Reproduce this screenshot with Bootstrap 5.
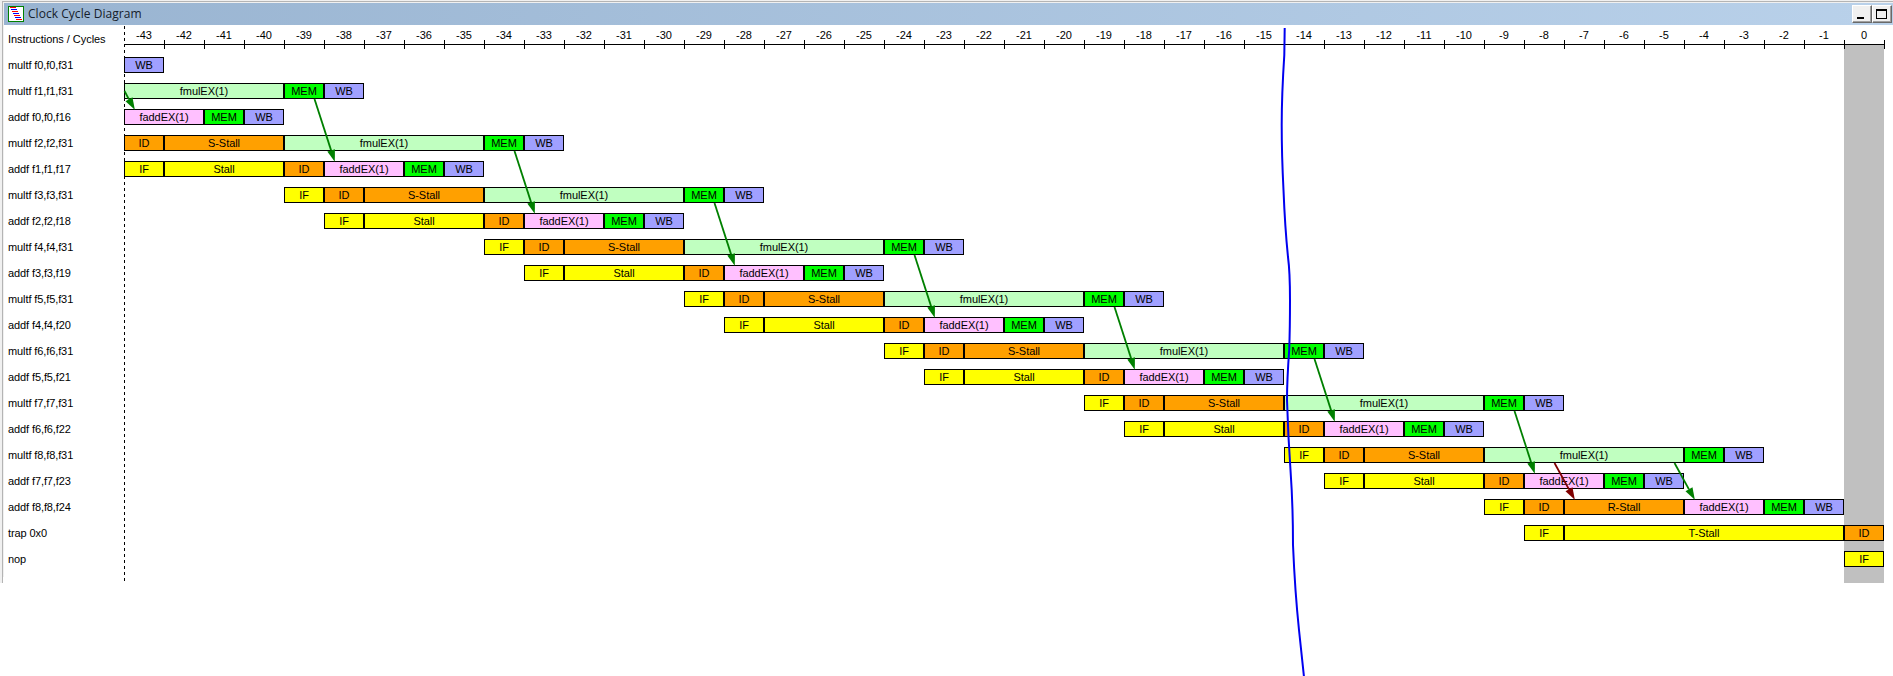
<!DOCTYPE html>
<html lang="en">
<head>
<meta charset="utf-8">
<title>Clock Cycle Diagram</title>
<link href="https://cdn.jsdelivr.net/npm/bootstrap@5.3.0/dist/css/bootstrap.min.css" rel="stylesheet">
<style>
  body { width: 1893px; height: 676px; background: #fff; color: #000; font-family: "Liberation Sans", Arial, sans-serif; font-size: 11px; line-height: 16px; }
  .win { height: 583px; border-top: 1px solid #f0f0f0; border-left: 2px solid #f0f0f0; }
  .win-inner { height: 582px; border-top: 1px solid #b4b4b4; border-left: 1px solid #b4b4b4; }
  .win-body { border-left: 1px solid #f0f0f0; border-top: 1px solid #f0f0f0; }
  .titlebar { height: 22px; padding-right: 1px; background: linear-gradient(90deg, #99b4d1, #b9d1ea); font-family: "Open Sans", "Noto Sans", sans-serif; color: #15202b; }
  .caption { font-size: 12px; letter-spacing: .04px; }
  .winbtn { width: 20px; height: 18px; background: #f0f0f0; border: 1px solid; border-color: #fff #696969 #696969 #fff; box-shadow: inset -1px -1px #a0a0a0; }
  .ruler { height: 32px; }
  .side { width: 120px; padding-left: 4px; white-space: nowrap; letter-spacing: -.1px; }
  .ruler .side { padding-top: 6px; letter-spacing: -.04px; }
  .grid-cols { display: grid; grid-template-columns: repeat(44, 40px); }
  .tick { height: 23px; padding-top: 2px; text-align: center; position: relative; }
  .scale { border-bottom: 1px solid #000; width: 1761px; height: 20px; }
  .tick::after { content: ""; position: absolute; right: -1px; top: 15px; width: 1px; height: 9px; background: #000; }
  .trow { height: 26px; }
  .stage { height: 16px; line-height: 15px; border: 1px solid #000; text-align: center; white-space: nowrap; overflow: hidden; letter-spacing: -.05px; }
  .s-WB { background: #a0a0ff; } .s-MEM { background: #0f0; } .s-EXM { background: #c0ffc0; }
  .s-EXA { background: #ffc0ff; } .s-ID { background: #ffa000; } .s-IF { background: #ff0; }
  .now { position: absolute; left: 1844px; top: 45px; width: 40px; height: 538px; background: #c0c0c0; }
  .rows { position: relative; }
  .overlay { position: absolute; left: 0; top: 0; pointer-events: none; }
</style>
<script src="https://cdn.jsdelivr.net/npm/bootstrap@5.3.0/dist/js/bootstrap.bundle.min.js"></script>
</head>
<body class="position-relative overflow-hidden m-0">
<div class="now"></div>
<div class="win">
  <div class="win-inner">
    <div class="win-body">
      <header class="titlebar d-flex align-items-center">
        <svg class="ms-1" width="16" height="16" viewBox="0 0 16 16" shape-rendering="crispEdges">
          <rect x=".5" y=".5" width="15" height="15" fill="#fff" stroke="#008000"/>
          <path d="M2 1.5h6M4 5.5h6M6 9.5h6M8 13.5h6" stroke="#f00"/>
          <path d="M3 3.5h6M5 7.5h6M7 11.5h6" stroke="#00f"/>
        </svg>
        <span class="caption ms-1">Clock Cycle Diagram</span>
        <div class="d-flex ms-auto">
          <div class="winbtn"><svg class="d-block" width="18" height="16" shape-rendering="crispEdges"><path d="M4 11h7v2H4z"/></svg></div>
          <div class="winbtn"><svg class="d-block" width="18" height="16" shape-rendering="crispEdges"><path fill-rule="evenodd" d="M3 3h11v10H3zM4 5v7h9V5z"/></svg></div>
        </div>
      </header>
      <div class="ruler d-flex">
        <div class="side">Instructions / Cycles</div>
        <div class="scale grid-cols" id="scale"></div>
      </div>
      <main class="rows" id="rows"></main>
    </div>
  </div>
</div>
<svg class="overlay" width="1893" height="676" viewBox="0 0 1893 676">
  <path d="M124.5 26V582" stroke="#000" stroke-dasharray="3 3" shape-rendering="crispEdges"/>
  <g id="arrows"></g>
  <path d="M1284.7 28L1284.3 55Q1281.7 95 1281.7 125T1283.5 190Q1285 228 1288 257Q1290 272 1290 300T1289.2 350Q1287 380 1287 400Q1288 435 1290.5 470T1293 545Q1295 592 1299 630L1304 677" fill="none" stroke="#0000f0" stroke-width="2"/>
</svg>
<script>
  const names = ["multf f0,f0,f31", "multf f1,f1,f31", "addf f0,f0,f16"];
  const rows = [
    [["WB", 0, 1]],
    [["fmulEX(1)", 0, 4], ["MEM", 4, 1], ["WB", 5, 1]],
    [["faddEX(1)", 0, 2], ["MEM", 2, 1], ["WB", 3, 1]]
  ];
  const arrows = [[114, 73, 134, 109, "#008000"]];
  for (let i = 0; i < 7; i++) {
    const c = 5 * i, n = i + 2;
    names.push(`multf f${n},f${n},f31`, `addf f${n - 1},f${n - 1},f${i + 17}`);
    const front = i ? [["IF", c - 1, 1]] : [];
    rows.push([...front, ["ID", c, 1], ["S-Stall", c + 1, 3], ["fmulEX(1)", c + 4, 5], ["MEM", c + 9, 1], ["WB", c + 10, 1]]);
    rows.push([["IF", c, 1], ["Stall", c + 1, 3], ["ID", c + 4, 1], ["faddEX(1)", c + 5, 2], ["MEM", c + 7, 1], ["WB", c + 8, 1]]);
    arrows.push([314 + 200 * i, 99 + 52 * i, 334 + 200 * i, 161 + 52 * i, "#008000"]);
  }
  names.push("addf f8,f8,f24", "trap 0x0", "nop");
  rows.push(
    [["IF", 34, 1], ["ID", 35, 1], ["R-Stall", 36, 3], ["faddEX(1)", 39, 2], ["MEM", 41, 1], ["WB", 42, 1]],
    [["IF", 35, 1], ["T-Stall", 36, 7], ["ID", 43, 1]],
    [["IF", 43, 1]]
  );
  arrows.push([1554, 463, 1574, 499, "#800000"], [1674, 463, 1694, 499, "#008000"]);

  const kind = t => ({ "fmulEX(1)": "EXM", "faddEX(1)": "EXA", "S-Stall": "ID", "R-Stall": "ID", "Stall": "IF", "T-Stall": "IF" }[t] || t);
  document.getElementById("scale").innerHTML =
    Array.from({ length: 44 }, (_, i) => `<div class="tick">${i - 43}</div>`).join("");
  document.getElementById("rows").innerHTML = rows.map((r, i) =>
    `<div class="trow d-flex"><div class="side">${names[i]}</div><div class="grid-cols">` +
    r.map(([t, s, w]) => `<div class="stage s-${kind(t)}" style="grid-column:${s + 1}/span ${w}">${t}</div>`).join("") +
    `</div></div>`).join("");

  // Shafts stop at the arrow head and are clipped at the left edge of the chart.
  document.getElementById("arrows").innerHTML = arrows.map(([x1, y1, x2, y2, col]) => {
    const d = Math.hypot(x2 - x1, y2 - y1), ux = (x2 - x1) / d, uy = (y2 - y1) / d;
    if (x1 < 124) { y1 += (124 - x1) * uy / ux; x1 = 124; }
    x1 += .5; x2 += .8; y2 += .8;
    const bx = x2 - ux * 12, by = y2 - uy * 12;
    return `<path d="M${x1} ${y1}L${bx} ${by}" stroke="${col}" stroke-width="1.8"/>` +
      `<path d="M${x2} ${y2}L${bx - uy * 4} ${by + ux * 4}L${bx + uy * 4} ${by - ux * 4}Z" fill="${col}"/>`;
  }).join("");
</script>
</body>
</html>
